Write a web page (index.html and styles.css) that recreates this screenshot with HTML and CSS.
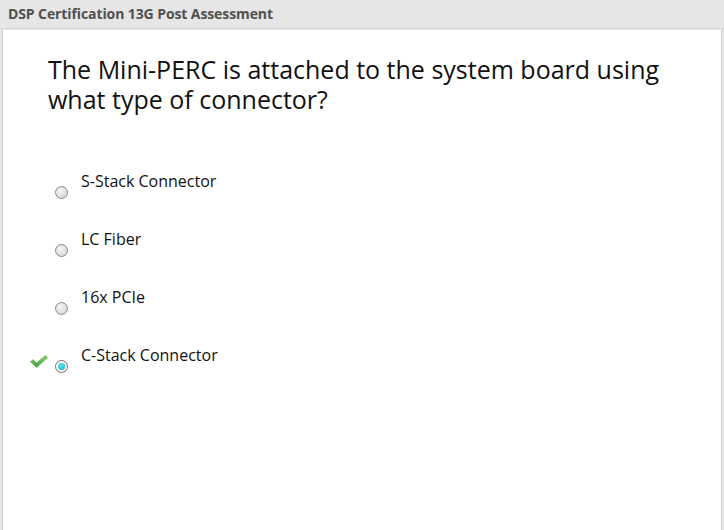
FILE: index.html
```html
<!DOCTYPE html>
<html>
<head>
<meta charset="utf-8">
<link rel="stylesheet" href="styles.css">
</head>
<body>
<div class="header">DSP Certification 13G Post Assessment</div>
<div class="panel">
  <h1 class="question">The Mini-PERC is attached to the system board using what type of connector?</h1>
  <ul class="options">
    <li class="option"><span class="mark"></span><span class="radio"></span><span class="label">S-Stack Connector</span></li>
    <li class="option"><span class="mark"></span><span class="radio"></span><span class="label">LC Fiber</span></li>
    <li class="option"><span class="mark"></span><span class="radio"></span><span class="label">16x PCIe</span></li>
    <li class="option"><span class="mark"><svg width="18" height="13" viewBox="0 0 18 13"><defs><linearGradient id="g" x1="0" y1="0" x2="0" y2="1"><stop offset="0" stop-color="#8fd46a"/><stop offset="1" stop-color="#3d9e3a"/></linearGradient></defs><path d="M0.5 6.8 L3 4.6 L6.4 8 L15.4 0.6 L17.5 2.6 L6.6 12.4 Z" fill="url(#g)" stroke="#4aa844" stroke-width="0.6" stroke-linejoin="round"/></svg></span><span class="radio selected"></span><span class="label">C-Stack Connector</span></li>
  </ul>
</div>
</body>
</html>
```
FILE: styles.css
```css
html, body {
  margin: 0;
  padding: 0;
  background: #e6e6e6;
  font-family: "Open Sans", "Noto Sans", sans-serif;
}
body {
  width: 724px;
  height: 530px;
  display: flex;
  flex-direction: column;
  overflow: hidden;
}
.header {
  height: 28px;
  padding-left: 8px;
  font-size: 14px;
  font-weight: bold;
  color: #505050;
  line-height: 28px;
  border-bottom: 1px solid #d8d8d8;
  letter-spacing: -0.1px;
}
.panel {
  flex: 1;
  background: #fff;
  margin: 1px 2px 0 2px;
  border-left: 1px solid #cfcfcf;
  border-right: 1px solid #cfcfcf;
  padding: 24px 0 0 45px;
}
.question {
  margin: 0;
  font-weight: normal;
  font-size: 25px;
  line-height: 30px;
  color: #111;
  width: 660px;
  letter-spacing: 0;
}
.options {
  list-style: none;
  margin: 62px 0 0 0;
  padding: 0;
}
.option {
  display: flex;
  align-items: flex-start;
  height: 58px;
  margin-left: -18px;
}
.mark {
  width: 18px;
  height: 13px;
  margin-top: 5px;
  margin-right: 7px;
}
.mark svg { display: block; }
.radio {
  width: 13px;
  height: 13px;
  border-radius: 50%;
  border: 1px solid #8a8a8a;
  background: radial-gradient(circle at 40% 35%, #f6f6f6, #cfcfcf);
  margin-top: 10px;
  box-sizing: border-box;
  position: relative;
  flex: none;
}
.radio.selected {
  background: #fff;
  border-color: #6a6a6a;
}
.radio.selected::after {
  content: "";
  position: absolute;
  left: 2px;
  top: 2px;
  width: 7px;
  height: 7px;
  border-radius: 50%;
  background: radial-gradient(circle at 40% 35%, #5fe0f0, #10b0cc);
}
.label {
  margin-left: 13px;
  font-size: 16px;
  line-height: 20px;
  color: #111;
  margin-top: -5px;
}
```
